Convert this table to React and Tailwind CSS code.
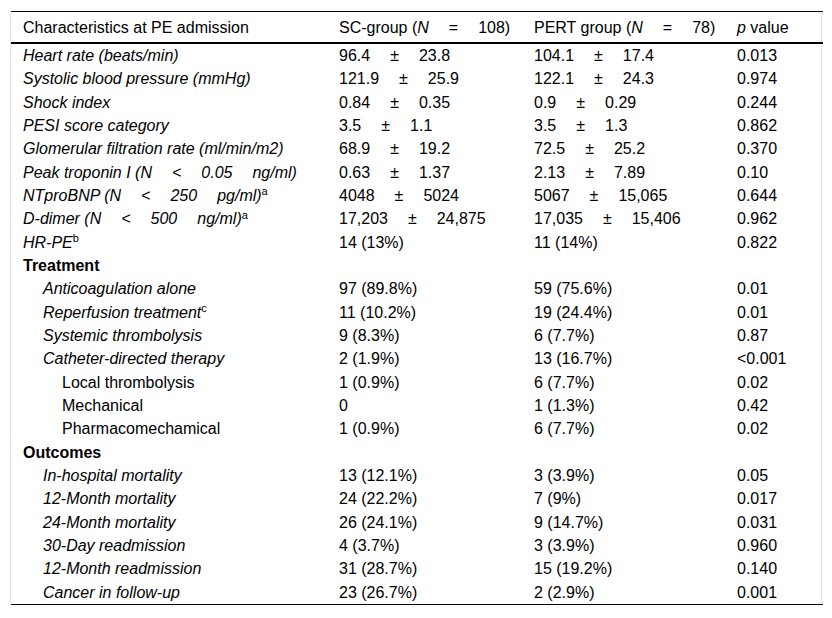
const Gap = () => <span className="inline-block w-[20px]" />

const PM = ({ a, b }) => (
  <>
    {a}
    <Gap />±<Gap />
    {b}
  </>
)

const Sup = ({ children }) => <sup className="text-[11px] not-italic">{children}</sup>

const rows = [
  { label: 'Heart rate (beats/min)', it: true, sc: <PM a="96.4" b="23.8" />, pert: <PM a="104.1" b="17.4" />, p: '0.013' },
  { label: 'Systolic blood pressure (mmHg)', it: true, sc: <PM a="121.9" b="25.9" />, pert: <PM a="122.1" b="24.3" />, p: '0.974' },
  { label: 'Shock index', it: true, sc: <PM a="0.84" b="0.35" />, pert: <PM a="0.9" b="0.29" />, p: '0.244' },
  { label: 'PESI score category', it: true, sc: <PM a="3.5" b="1.1" />, pert: <PM a="3.5" b="1.3" />, p: '0.862' },
  { label: 'Glomerular filtration rate (ml/min/m2)', it: true, sc: <PM a="68.9" b="19.2" />, pert: <PM a="72.5" b="25.2" />, p: '0.370' },
  {
    label: <>Peak troponin I (N<Gap />&lt;<Gap />0.05<Gap />ng/ml)</>,
    it: true, sc: <PM a="0.63" b="1.37" />, pert: <PM a="2.13" b="7.89" />, p: '0.10',
  },
  {
    label: <>NTproBNP (N<Gap />&lt;<Gap />250<Gap />pg/ml)<Sup>a</Sup></>,
    it: true, sc: <PM a="4048" b="5024" />, pert: <PM a="5067" b="15,065" />, p: '0.644',
  },
  {
    label: <>D-dimer (N<Gap />&lt;<Gap />500<Gap />ng/ml)<Sup>a</Sup></>,
    it: true, sc: <PM a="17,203" b="24,875" />, pert: <PM a="17,035" b="15,406" />, p: '0.962',
  },
  { label: <>HR-PE<Sup>b</Sup></>, it: true, sc: '14 (13%)', pert: '11 (14%)', p: '0.822' },
  { label: 'Treatment', bold: true },
  { label: 'Anticoagulation alone', it: true, lvl: 1, sc: '97 (89.8%)', pert: '59 (75.6%)', p: '0.01' },
  { label: <>Reperfusion treatment<Sup>c</Sup></>, it: true, lvl: 1, sc: '11 (10.2%)', pert: '19 (24.4%)', p: '0.01' },
  { label: 'Systemic thrombolysis', it: true, lvl: 1, sc: '9 (8.3%)', pert: '6 (7.7%)', p: '0.87' },
  { label: 'Catheter-directed therapy', it: true, lvl: 1, sc: '2 (1.9%)', pert: '13 (16.7%)', p: '<0.001' },
  { label: 'Local thrombolysis', lvl: 2, sc: '1 (0.9%)', pert: '6 (7.7%)', p: '0.02' },
  { label: 'Mechanical', lvl: 2, sc: '0', pert: '1 (1.3%)', p: '0.42' },
  { label: 'Pharmacomechamical', lvl: 2, sc: '1 (0.9%)', pert: '6 (7.7%)', p: '0.02' },
  { label: 'Outcomes', bold: true },
  { label: 'In-hospital mortality', it: true, lvl: 1, sc: '13 (12.1%)', pert: '3 (3.9%)', p: '0.05' },
  { label: '12-Month mortality', it: true, lvl: 1, sc: '24 (22.2%)', pert: '7 (9%)', p: '0.017' },
  { label: '24-Month mortality', it: true, lvl: 1, sc: '26 (24.1%)', pert: '9 (14.7%)', p: '0.031' },
  { label: '30-Day readmission', it: true, lvl: 1, sc: '4 (3.7%)', pert: '3 (3.9%)', p: '0.960' },
  { label: '12-Month readmission', it: true, lvl: 1, sc: '31 (28.7%)', pert: '15 (19.2%)', p: '0.140' },
  { label: 'Cancer in follow-up', it: true, lvl: 1, sc: '23 (26.7%)', pert: '2 (2.9%)', p: '0.001' },
]

export default function App() {
  return (
    <div className="bg-white w-[832px] h-[618px] pt-[11px] pl-[10px] font-['Liberation_Sans',Arial,sans-serif] text-[16px] text-black">
      <div className="w-[812px] border-x border-[#e4e4e4]">
        <table className="w-full table-fixed border-collapse">
          <colgroup>
            <col className="w-[316px]" />
            <col className="w-[195px]" />
            <col className="w-[203px]" />
            <col className="w-[98px]" />
          </colgroup>
          <thead>
            <tr className="border-t border-black border-b-2">
              <th className="text-left font-normal px-[12px] py-[6.5px] leading-[17px]">Characteristics at PE admission</th>
              <th className="text-left font-normal px-[12px] py-[6.5px] leading-[17px] whitespace-nowrap">
                SC-group (<i>N</i><Gap />=<Gap />108)
              </th>
              <th className="text-left font-normal px-[12px] py-[6.5px] leading-[17px] whitespace-nowrap">
                PERT group (<i>N</i><Gap />=<Gap />78)
              </th>
              <th className="text-left font-normal px-[12px] py-[6.5px] leading-[17px]">
                <i>p</i> value
              </th>
            </tr>
          </thead>
          <tbody className="border-b border-black">
            {rows.map((r, i) => (
              <tr key={i}>
                <td
                  className={
                    'py-[3px] pr-[12px] leading-[17.33px] whitespace-nowrap ' +
                    (r.lvl === 2 ? 'pl-[51px] ' : r.lvl === 1 ? 'pl-[32px] ' : 'pl-[12px] ') +
                    (r.bold ? 'font-bold ' : '') +
                    (r.it ? 'italic' : '')
                  }
                >
                  {r.label}
                </td>
                <td className="py-[3px] px-[12px] leading-[17.33px] whitespace-nowrap">{r.sc}</td>
                <td className="py-[3px] px-[12px] leading-[17.33px] whitespace-nowrap">{r.pert}</td>
                <td className="py-[3px] px-[12px] leading-[17.33px] whitespace-nowrap">{r.p}</td>
              </tr>
            ))}
          </tbody>
        </table>
      </div>
    </div>
  )
}
